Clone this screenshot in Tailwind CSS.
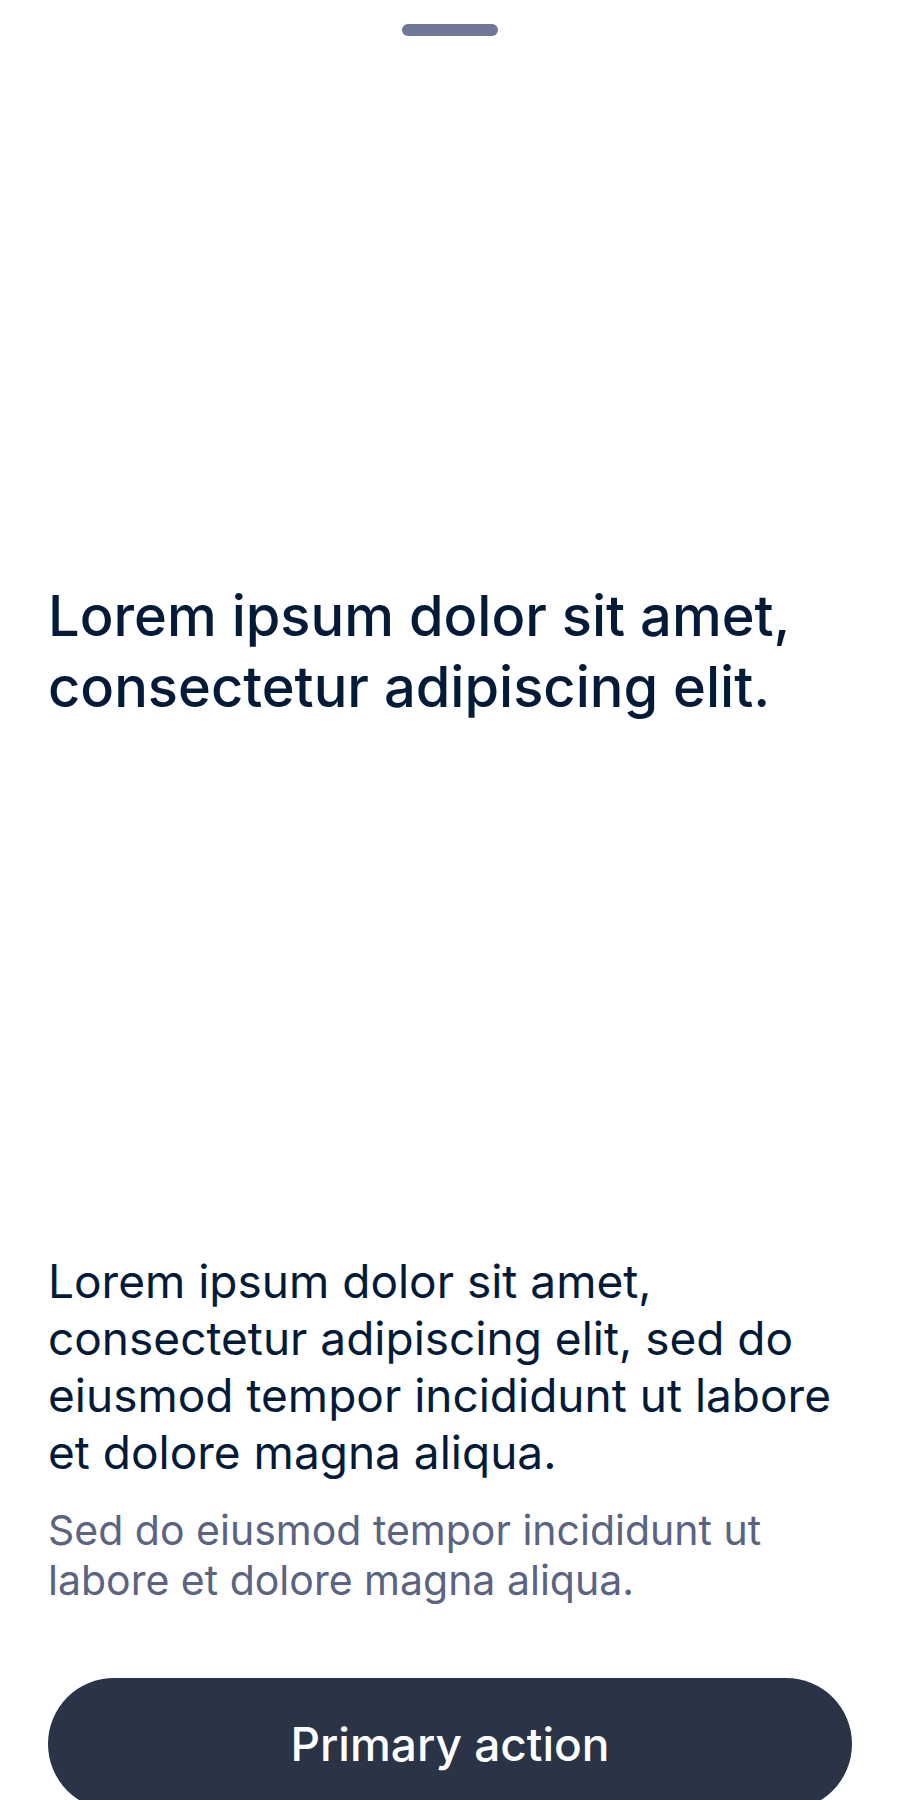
<!DOCTYPE html>
<html lang="en">
<head>
<meta charset="utf-8">
<meta name="viewport" content="width=device-width, initial-scale=1">
<title>Bottom sheet</title>
<script src="https://cdn.jsdelivr.net/npm/@tailwindcss/browser@4"></script>
</head>
<body class="bg-white h-screen overflow-hidden font-['Inter',sans-serif] text-[#031b38]">
<main class="flex flex-col px-12 pt-6">
  <div class="h-3 w-24 self-center rounded-full bg-[#6f7896]"></div>
  <h1 class="mt-[545px] text-[56px] leading-[71px] font-medium">Lorem ipsum dolor sit amet,<br>consectetur adipiscing elit.</h1>
  <p class="mt-[530px] text-[46px] leading-[57px]">Lorem ipsum dolor sit amet,<br>consectetur adipiscing elit, sed do<br>eiusmod tempor incididunt ut labore<br>et dolore magna aliqua.</p>
  <p class="mt-6 text-[41px] leading-[50px] text-[#5a6482]">Sed do eiusmod tempor incididunt ut<br>labore et dolore magna aliqua.</p>
  <button type="button" class="mt-[73px] h-[132px] shrink-0 rounded-full bg-[#2b3347] text-[46px] font-medium text-white">Primary action</button>
</main>
</body>
</html>
